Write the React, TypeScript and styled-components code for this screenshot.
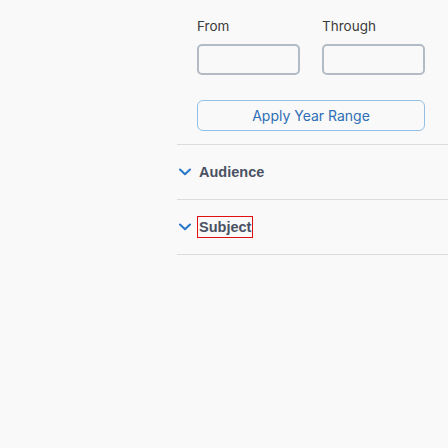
import React from "react";
import styled, { createGlobalStyle } from "styled-components";

const Global = createGlobalStyle`
  html, body { margin: 0; padding: 0; background: #f9f9f9; }
  body { font-family: Inter, "Liberation Sans", sans-serif; }
`;

const Page = styled.div`
  width: 448px;
  height: 448px;
  overflow: hidden;
  padding-left: 177px;
  box-sizing: border-box;
`;

const Panel = styled.div`
  width: 300px;
`;

const RangeSection = styled.div`
  padding: 16px 0 13px 20px;
  border-bottom: 1px solid #dcdcdc;
`;

const Grid = styled.div`
  display: grid;
  grid-template-columns: 103px 103px;
  column-gap: 22px;
`;

const Label = styled.label`
  font-size: 13.5px;
  line-height: 20px;
  color: #3b3b3b;
  margin-bottom: 8px;
`;

const Input = styled.input`
  width: 103px;
  height: 31px;
  box-sizing: border-box;
  border: 2px solid #b3bbc5;
  border-radius: 5px;
  background: transparent;
  outline: none;
`;

const ApplyButton = styled.button`
  display: block;
  margin-top: 25px;
  width: 228px;
  height: 31px;
  border: 1px solid #94c0e6;
  border-radius: 6px;
  background: transparent;
  color: #2f6fb6;
  font-family: Inter, "Liberation Sans", sans-serif;
  font-size: 14px;
  font-weight: 400;
  padding: 0;
`;

const FacetRow = styled.div`
  display: flex;
  align-items: center;
  height: 54px;
  border-bottom: 1px solid #dcdcdc;
  padding-left: 2px;
  gap: 8px;
`;

const Chevron = styled.svg`
  width: 12px;
  height: 8px;
  flex: none;
`;

const FacetTitle = styled.span<{ $outlined?: boolean }>`
  font-family: "Liberation Sans", Arial, sans-serif;
  font-weight: 700;
  font-size: 14.5px;
  line-height: 20px;
  color: #4a5163;
  padding: 0 1px;
  margin-left: -2px;
  border: 1px solid ${(p) => (p.$outlined ? "#e01010" : "transparent")};
`;

const ChevronIcon = () => (
  <Chevron viewBox="0 0 12 8">
    <path d="M1 1.5 L6 6.2 L11 1.5" fill="none" stroke="#2a78c8" strokeWidth="2.1" strokeLinecap="round" strokeLinejoin="round" />
  </Chevron>
);

export default function App() {
  return (
    <>
      <Global />
      <Page>
        <Panel>
          <RangeSection>
            <Grid>
              <Label>From</Label>
              <Label>Through</Label>
              <Input aria-label="From" />
              <Input aria-label="Through" />
            </Grid>
            <ApplyButton>Apply Year Range</ApplyButton>
          </RangeSection>
          <FacetRow>
            <ChevronIcon />
            <FacetTitle>Audience</FacetTitle>
          </FacetRow>
          <FacetRow>
            <ChevronIcon />
            <FacetTitle $outlined>Subject</FacetTitle>
          </FacetRow>
        </Panel>
      </Page>
    </>
  );
}
